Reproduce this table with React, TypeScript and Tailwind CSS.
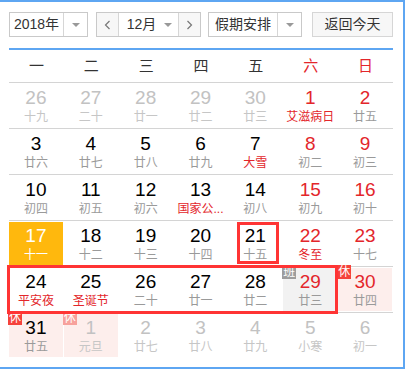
import clsx from "clsx";

type Day = {
  d: number;
  l: string;
  other?: boolean;
  red?: boolean;
  lred?: boolean;
  today?: boolean;
  mark?: "work" | "rest";
};

const rows: Day[][] = [
  [
    { d: 26, l: "十九", other: true },
    { d: 27, l: "二十", other: true },
    { d: 28, l: "廿一", other: true },
    { d: 29, l: "廿二", other: true },
    { d: 30, l: "廿三", other: true },
    { d: 1, l: "艾滋病日", red: true, lred: true },
    { d: 2, l: "廿五", red: true },
  ],
  [
    { d: 3, l: "廿六" },
    { d: 4, l: "廿七" },
    { d: 5, l: "廿八" },
    { d: 6, l: "廿九" },
    { d: 7, l: "大雪", lred: true },
    { d: 8, l: "初二", red: true },
    { d: 9, l: "初三", red: true },
  ],
  [
    { d: 10, l: "初四" },
    { d: 11, l: "初五" },
    { d: 12, l: "初六" },
    { d: 13, l: "国家公...", lred: true },
    { d: 14, l: "初八" },
    { d: 15, l: "初九", red: true },
    { d: 16, l: "初十", red: true },
  ],
  [
    { d: 17, l: "十一", today: true },
    { d: 18, l: "十二" },
    { d: 19, l: "十三" },
    { d: 20, l: "十四" },
    { d: 21, l: "十五" },
    { d: 22, l: "冬至", red: true, lred: true },
    { d: 23, l: "十七", red: true },
  ],
  [
    { d: 24, l: "平安夜", lred: true },
    { d: 25, l: "圣诞节", lred: true },
    { d: 26, l: "二十" },
    { d: 27, l: "廿一" },
    { d: 28, l: "廿二" },
    { d: 29, l: "廿三", red: true, mark: "work" },
    { d: 30, l: "廿四", red: true, mark: "rest" },
  ],
  [
    { d: 31, l: "廿五", mark: "rest" },
    { d: 1, l: "元旦", other: true, mark: "rest" },
    { d: 2, l: "廿七", other: true },
    { d: 3, l: "廿八", other: true },
    { d: 4, l: "廿九", other: true },
    { d: 5, l: "小寒", other: true },
    { d: 6, l: "初一", other: true },
  ],
];

const weekdays = ["一", "二", "三", "四", "五", "六", "日"];

function Caret() {
  return <span className="h-0 w-0 border-x-[4px] border-t-[4px] border-x-transparent border-t-[#999]" />;
}

function Chevron({ dir }: { dir: "l" | "r" }) {
  return (
    <svg width="7" height="10" viewBox="0 0 7 10" fill="none" stroke="#777" strokeWidth="1.2">
      {dir === "l" ? <path d="M5.5 1 L1.5 5 L5.5 9" /> : <path d="M1.5 1 L5.5 5 L1.5 9" />}
    </svg>
  );
}

function Cell({ day }: { day: Day }) {
  const numColor = day.today
    ? "text-white"
    : day.other
      ? "text-[#c2c2c2]"
      : day.red
        ? "text-[#e3262b]"
        : "text-black";
  const lunarColor = day.today
    ? "text-white"
    : day.other
      ? "text-[#c6c6c6]"
      : day.lred
        ? "text-[#e3262b]"
        : "text-[#9a9a9a]";

  return (
    <div
      className={clsx(
        "relative mr-px mt-px flex h-[43px] flex-col items-center",
        day.today && "bg-[#ffb80d]",
        day.mark === "work" && "bg-[#f2f2f2]",
        day.mark === "rest" && "bg-[#fdeeec]"
      )}
    >
      {day.mark && (
        <span
          className={clsx(
            "absolute -left-px -top-[3px] flex h-[14px] w-[14px] items-center justify-center text-[12px] leading-none text-white",
            day.mark === "work" ? "bg-[#9d9d9d]" : day.other ? "bg-[#f7a19c]" : "bg-[#f5423b]"
          )}
        >
          {day.mark === "work" ? "班" : "休"}
        </span>
      )}
      <span className={clsx("mt-[4px] text-[19px] leading-[20px]", numColor)}>{day.d}</span>
      <span className={clsx("mt-[2px] whitespace-nowrap text-[12px] leading-[14px]", lunarColor)}>{day.l}</span>
    </div>
  );
}

export default function App() {
  return (
    <div
      className="relative h-[369px] w-[406px] bg-white"
      style={{ fontFamily: '"Liberation Sans", Arial, "Noto Sans CJK SC", sans-serif' }}
    >
      <div className="h-[369px] w-[405px] border-b-2 border-r-2 border-t-2 border-[#5ea6f2] pl-[9px] pt-[10px]">
        {/* controls */}
        <div className="flex h-[25px] items-stretch text-[14px] text-[#333]">
          <div className="flex w-[79px] border border-[#c9c9c9]">
            <span className="flex flex-1 items-center justify-center">2018年</span>
            <span className="flex w-[24px] items-center justify-center border-l border-[#d6d6d6]">
              <Caret />
            </span>
          </div>
          <div className="ml-[8px] flex w-[105px] border border-[#c9c9c9]">
            <span className="flex w-[22px] items-center justify-center border-r border-[#d6d6d6] bg-[#f7f7f7]">
              <Chevron dir="l" />
            </span>
            <span className="flex flex-1 items-center justify-center gap-[8px] pl-[2px]">
              12月
              <Caret />
            </span>
            <span className="flex w-[22px] items-center justify-center border-l border-[#d6d6d6] bg-[#f7f7f7]">
              <Chevron dir="r" />
            </span>
          </div>
          <div className="ml-[7px] flex w-[94px] border border-[#c9c9c9]">
            <span className="flex flex-1 items-center justify-center">假期安排</span>
            <span className="flex w-[24px] items-center justify-center border-l border-[#d6d6d6]">
              <Caret />
            </span>
          </div>
          <button className="ml-[10px] flex w-[81px] items-center justify-center border border-[#d6d6d6] bg-[#f7f7f7] text-[#333]">
            返回今天
          </button>
        </div>

        {/* calendar */}
        <div className="mt-[11px] w-[384px] border-t-2 border-[#5ea6f2]">
          <div className="grid h-[33px] grid-cols-7 border-b border-[#d4d4d4] text-[15px]">
            {weekdays.map((w, i) => (
              <div
                key={w}
                className={clsx("flex items-center justify-center", i >= 5 ? "text-[#e3262b]" : "text-[#333]")}
              >
                {w}
              </div>
            ))}
          </div>
          {rows.map((row, ri) => (
            <div
              key={ri}
              className={clsx("grid h-[46px] grid-cols-7", ri < rows.length - 1 && "border-b border-[#d4d4d4]")}
            >
              {row.map((day, ci) => (
                <Cell key={ci} day={day} />
              ))}
            </div>
          ))}
        </div>
      </div>

      {/* selection outlines */}
      <div className="absolute left-[237px] top-[222px] h-[42px] w-[42px] border-[3px] border-[#ff3434]" />
      <div className="absolute left-[7px] top-[265px] h-[49px] w-[331px] border-[3px] border-[#ff3434]" />
    </div>
  );
}
